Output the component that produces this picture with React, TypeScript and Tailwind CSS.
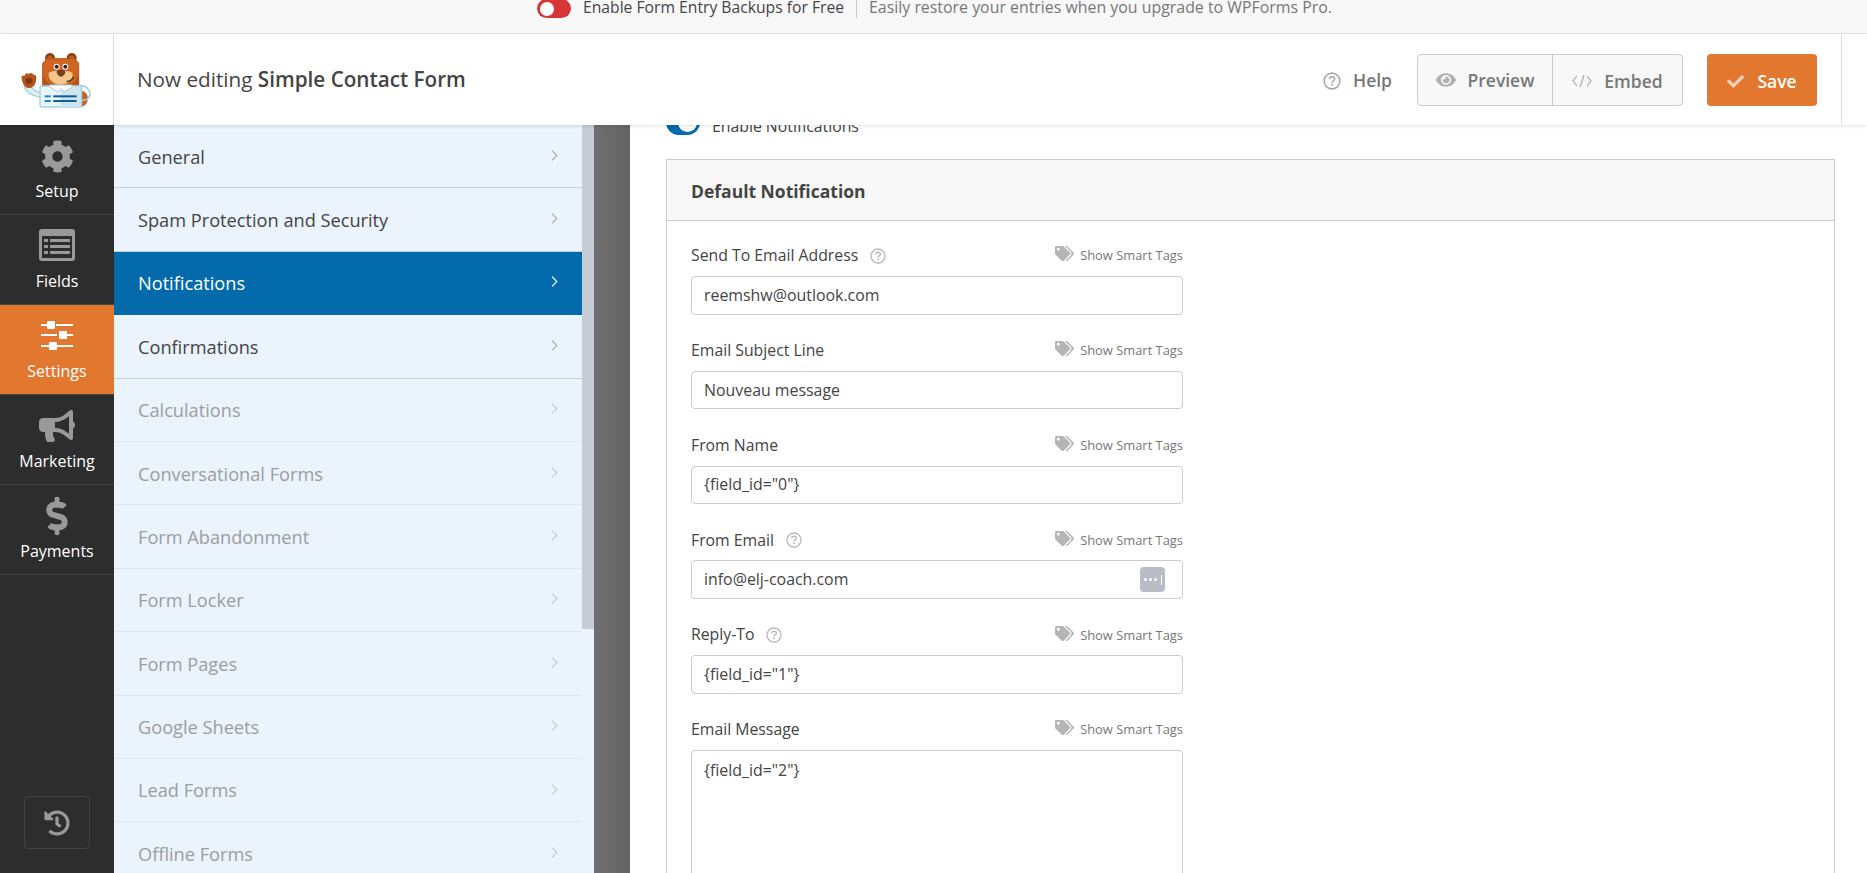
import { FaBullhorn, FaCheck, FaCog, FaDollarSign, FaEye, FaHistory, FaTags } from 'react-icons/fa';

const menu = [
  { label: 'General' },
  { label: 'Spam Protection and Security' },
  { label: 'Notifications', active: true },
  { label: 'Confirmations' },
  { label: 'Calculations', muted: true },
  { label: 'Conversational Forms', muted: true },
  { label: 'Form Abandonment', muted: true },
  { label: 'Form Locker', muted: true },
  { label: 'Form Pages', muted: true },
  { label: 'Google Sheets', muted: true },
  { label: 'Lead Forms', muted: true },
  { label: 'Offline Forms', muted: true },
];

const fields = [
  { label: 'Send To Email Address', value: 'reemshw@outlook.com', help: true },
  { label: 'Email Subject Line', value: 'Nouveau message' },
  { label: 'From Name', value: '{field_id="0"}' },
  { label: 'From Email', value: 'info@elj-coach.com', help: true, more: true },
  { label: 'Reply-To', value: '{field_id="1"}', help: true },
];

function Bear() {
  return (
    <svg viewBox="0 0 228 180" className="w-[76px] h-[60px]">
      {/* tail and far arm */}
      <path d="M183 122c14 2 22 12 20 28-2 12-10 20-20 20z" fill="#c85f1f" />
      <path d="M180 106c18 2 30 12 30 26 0 10-8 18-24 20" fill="none" stroke="#a6cfdd" strokeWidth="5" />
      {/* waving arm */}
      <path d="M12 108c6 18 24 30 50 34l2-14c-16-2-28-10-36-24z" fill="#e0f0f5" stroke="#a6cfdd" strokeWidth="4" />
      {/* paw */}
      <path d="M5 86c-2-8 4-12 9-8 0-9 9-11 13-5 3-7 12-5 13 2 6-2 10 3 9 9 0 16-8 30-21 30S8 102 5 86z" fill="#b4531c" />
      <path d="M16 90c0-6 6-7 11-7s11 1 11 7-5 13-11 13-11-7-11-13z" fill="#7c3a17" />
      {/* ears */}
      <circle cx="90" cy="24" r="15" fill="#8f4216" />
      <circle cx="155" cy="24" r="15" fill="#8f4216" />
      <circle cx="90" cy="26" r="8" fill="#c85f1f" />
      <circle cx="155" cy="26" r="8" fill="#c85f1f" />
      {/* head */}
      <path d="M82 26h82l12 14v68l-6 8H74l-6-8V40z" fill="#cf6520" stroke="#b4531c" strokeWidth="3" />
      <path d="M70 74c8 26 28 36 53 36s45-10 52-36v40H70z" fill="#b4531c" />
      <path d="M86 70c6-8 18-6 26-8h20c8 2 20 0 26 8 2 18-14 34-36 34s-38-16-36-34z" fill="#f5c78d" />
      {/* eyes */}
      <circle cx="110" cy="50" r="9" fill="#fff" />
      <circle cx="136" cy="50" r="9" fill="#fff" />
      <circle cx="110" cy="50" r="6" fill="#2c2530" />
      <circle cx="136" cy="50" r="6" fill="#2c2530" />
      {/* nose and smile */}
      <path d="M110 66c0-5 6-6 13-6s13 1 13 6-7 14-13 14-13-9-13-14z" fill="#774019" />
      <path d="M140 94c8 0 16-4 21-13" fill="none" stroke="#4a2a1a" strokeWidth="4" />
      {/* shirt */}
      <rect x="60" y="108" width="125" height="63" rx="5" fill="#eaf5f9" stroke="#a6cfdd" strokeWidth="4" />
      <path d="M122 110h61v58a2 2 0 0 1-2 2h-59z" fill="#cfe5ee" />
      <path d="M84 108l30 18 9-10 9 10 30-18-8-3H92z" fill="#fff" stroke="#a6cfdd" strokeWidth="3" />
      <rect x="74" y="136" width="18" height="6" fill="#1e88d2" />
      <rect x="100" y="136" width="70" height="6" fill="#0e5e9c" />
      <rect x="74" y="150" width="18" height="6" fill="#1e88d2" />
      <rect x="100" y="150" width="70" height="6" fill="#0e5e9c" />
    </svg>
  );
}

function QuestionIcon({ className }: { className: string }) {
  return (
    <svg viewBox="0 0 16 16" className={className} fill="none" stroke="currentColor">
      <circle cx="8" cy="8" r="7" strokeWidth="1.4" />
      <path d="M5.8 6.3c0-1.3 1-2 2.3-2s2.2.8 2.2 1.9c0 1.7-2.2 1.7-2.2 3.4" strokeWidth="1.5" />
      <path d="M8.1 10.6v1.6" strokeWidth="1.6" />
    </svg>
  );
}

function Chevron({ className }: { className: string }) {
  return (
    <svg viewBox="0 0 8 14" className={className} fill="none" stroke="currentColor" strokeWidth="1.3">
      <path d="M1.2 1.5 6.6 7l-5.4 5.5" />
    </svg>
  );
}

function NavItem({ label, icon, active }: { label: string; icon: React.ReactNode; active?: boolean }) {
  return (
    <div
      className={`h-[90px] flex flex-col items-center border-b border-[#444] ${
        active ? 'bg-[#e27730] text-white' : 'text-[#999]'
      }`}
    >
      <div className="h-[56px] flex items-center justify-center pt-[6px]">{icon}</div>
      <span className="text-[16px] text-white leading-[20px]">{label}</span>
    </div>
  );
}

function FieldLabel({ label, help }: { label: string; help?: boolean }) {
  return (
    <div className="h-[37px] pt-[1px] flex items-center justify-between">
      <div className="flex items-center gap-[12px] text-[15.8px] text-[#444]">
        {label}
        {help && <QuestionIcon className="w-4 h-4 text-[#bbb]" />}
      </div>
      <div className="flex items-center gap-[6px] text-[12.9px] text-[#777]">
        <FaTags className="w-[19px] h-[17px] text-[#b5b5b5] -mt-1" />
        Show Smart Tags
      </div>
    </div>
  );
}

export default function App() {
  return (
    <div className="h-[873px] overflow-hidden flex flex-col bg-white font-['Open_Sans',sans-serif]">
      <div className="h-[34px] shrink-0 bg-[#f8f8f8] border-b border-[#e8e8e8] flex items-start pl-[537px] leading-[14px] overflow-hidden">
        <div className="w-[34px] h-[19px] -mt-[1px] rounded-full bg-[#d63638] flex items-center pl-[3px]">
          <div className="w-[14px] h-[14px] rounded-full bg-white" />
        </div>
        <span className="ml-[12px] text-[15.7px] text-[#444]">Enable Form Entry Backups for Free</span>
        <div className="w-px h-[18px] bg-[#ccc] mx-[12px]" />
        <span className="text-[15.9px] text-[#777]">Easily restore your entries when you upgrade to WPForms Pro.</span>
      </div>

      <div className="h-[91px] shrink-0 relative z-10 bg-white flex items-center shadow-[0_1px_4px_rgba(0,0,0,0.12)]">
        <div className="w-[114px] h-full border-r border-[#ddd] flex items-center justify-center pt-[1px] pl-[3px]">
          <Bear />
        </div>
        <div className="pl-[23px] pt-px text-[20.7px] text-[#444]">
          Now editing <span className="font-semibold">Simple Contact Form</span>
        </div>
        <div className="ml-auto flex items-center h-full">
          <div className="flex items-center gap-[12px] text-[#777] text-[17.5px] font-semibold mr-[25px] pt-[2px]">
            <QuestionIcon className="w-[18px] h-[18px] text-[#aaa]" />
            Help
          </div>
          <div className="flex h-[52px] w-[266px] border border-[#ccc] rounded bg-[#f8f8f8] text-[#777] text-[17.5px] font-semibold">
            <div className="w-[135px] flex items-center justify-center gap-[12px] border-r border-[#ccc] pt-[2px]">
              <FaEye className="w-[20px] h-[20px] text-[#b0b0b0] -mt-[2px]" />
              Preview
            </div>
            <div className="flex-1 flex items-center justify-center gap-[12px] pt-[3px]">
              <svg viewBox="0 0 20 14" className="w-[20px] h-[14px] text-[#aaa]" fill="none" stroke="currentColor" strokeWidth="1.2">
                <path d="M5 2 1 7l4 5M15 2l4 5-4 5M12 1 8 13" />
              </svg>
              Embed
            </div>
          </div>
          <div className="ml-[24px] w-[110px] h-[52px] rounded bg-[#e27730] text-white text-[17.5px] font-semibold flex items-center justify-center gap-[13px] pt-[3px]">
            <FaCheck className="w-[17px] h-[17px] text-[#f8d0b5]" />
            Save
          </div>
          <div className="ml-[24px] w-[26px] h-full border-l border-[#ddd]" />
        </div>
      </div>

      <div className="flex-1 flex min-h-0">
        <div className="w-[114px] shrink-0 bg-[#2d2d2d] flex flex-col">
          <NavItem label="Setup" icon={<FaCog className="w-[33px] h-[33px]" />} />
          <NavItem
            label="Fields"
            icon={
              <svg viewBox="0 0 36 32" className="w-[36px] h-[32px] -mt-[2px]">
                <rect x="0" y="0" width="36" height="32" rx="3" fill="#999" />
                <rect x="3" y="7" width="30" height="22" fill="#2d2d2d" />
                <path d="M5 10h4v3H5zM11 10h20v3H11zM5 16h4v3H5zM11 16h20v3H11zM5 22h4v3H5zM11 22h20v3H11z" fill="#999" />
              </svg>
            }
          />
          <NavItem
            label="Settings"
            active
            icon={
              <svg viewBox="0 0 32 30" className="w-[32px] h-[30px]" fill="#fff">
                <path d="M0 3h8v2H0zM15 3h17v2H15zM0 13h16v2H0zM23 13h9v2h-9zM0 24h9v2H0zM16 24h16v2H16z" />
                <rect x="6" y="0" width="8" height="8" rx="1" />
                <rect x="18" y="10" width="8" height="8" rx="1" />
                <rect x="8" y="21" width="8" height="8" rx="1" />
              </svg>
            }
          />
          <NavItem label="Marketing" icon={<FaBullhorn className="w-[36px] h-[32px]" />} />
          <NavItem label="Payments" icon={<FaDollarSign className="w-[34px] h-[38px]" />} />
          <div className="mt-auto mb-[24px] mx-auto w-[66px] h-[53px] border border-[#444] rounded flex items-center justify-center text-[#999]">
            <FaHistory className="w-[26px] h-[26px]" />
          </div>
        </div>

        <div className="w-[480px] shrink-0 bg-[#ebf3fc] flex overflow-hidden">
          <div className="w-[468px] shrink-0">
            {menu.map((item) => (
              <div
                key={item.label}
                className={`h-[63.4px] flex items-center justify-between pt-[2px] pl-[24px] pr-[24px] border-b text-[18.2px] ${
                  item.active
                    ? 'bg-[#036aab] text-white border-[#036aab]'
                    : item.muted
                      ? 'text-[#9a9ea3] border-[#dfe6ef]'
                      : 'text-[#444] border-[#c8d0da]'
                }`}
              >
                {item.label}
                <Chevron
                  className={`w-[7px] h-[13px] -mt-[4px] ${
                    item.active ? 'text-white' : item.muted ? 'text-[#c5cad0]' : 'text-[#a6abb0]'
                  }`}
                />
              </div>
            ))}
          </div>
          <div className="w-[12px] shrink-0">
            <div className="h-[504px] bg-[#c5ccd5]" />
          </div>
        </div>

        <div className="w-[36px] shrink-0 bg-gradient-to-r from-[#707070] to-[#636363]" />

        <div className="flex-1 min-w-0 overflow-hidden pl-[36px] pr-[32px]">
          <div className="h-[49px] -mt-[15px] flex items-start gap-[12px] text-[15.8px] text-[#444]">
            <div className="w-[34px] h-[25px] rounded-full bg-[#036aab] flex items-center justify-end pr-[3px]">
              <div className="w-[19px] h-[19px] rounded-full bg-white" />
            </div>
            <span className="mt-[5px]">Enable Notifications</span>
          </div>
          <div className="border border-[#ccc]">
            <div className="h-[61px] pt-[2px] bg-[#f8f8f8] border-b border-[#ccc] flex items-center pl-[24px] text-[17.5px] font-bold text-[#444]">
              Default Notification
            </div>
            <div className="pl-[24px] pt-[16px]">
              <div className="w-[492px]">
                {fields.map((field) => (
                  <div key={field.label} className="h-[94.8px]">
                    <FieldLabel label={field.label} help={field.help} />
                    <div className="mt-[2px] h-[38.5px] pt-px border border-[#ccc] rounded flex items-center justify-between pl-[12px] pr-[17px] text-[15.9px] text-[#444]">
                      {field.value}
                      {field.more && (
                        <div className="w-[25px] h-[25px] -mt-px rounded bg-[#b7bcc7] flex items-center justify-center gap-[2px]">
                          <span className="w-[3px] h-[3px] rounded-full bg-white" />
                          <span className="w-[3px] h-[3px] rounded-full bg-white" />
                          <span className="w-[3px] h-[3px] rounded-full bg-white" />
                          <span className="w-px h-[10px] ml-[2px] bg-white" />
                        </div>
                      )}
                    </div>
                  </div>
                ))}
                <FieldLabel label="Email Message" />
                <div className="mt-[2px] h-[260px] border border-[#ccc] rounded px-[12px] py-[8px] text-[15.9px] text-[#444]">
                  {'{field_id="2"}'}
                </div>
              </div>
            </div>
          </div>
        </div>
      </div>
    </div>
  );
}
